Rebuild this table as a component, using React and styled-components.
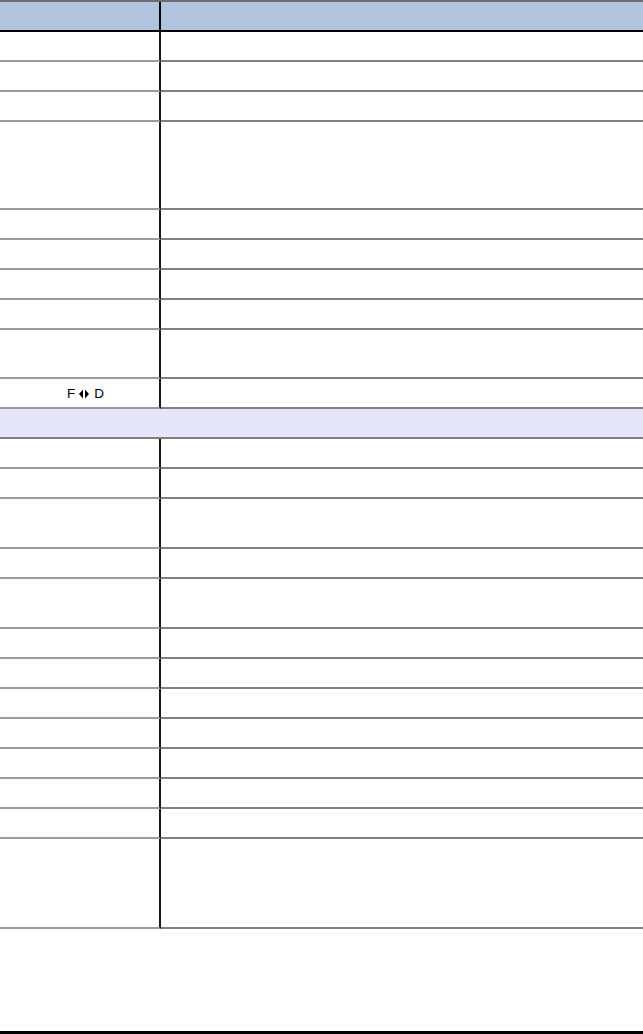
import styled, { createGlobalStyle } from "styled-components";

const GlobalStyle = createGlobalStyle`
  html, body {
    margin: 0;
    padding: 0;
    background: #ffffff;
  }
  body {
    font-family: "Liberation Sans", Arial, sans-serif;
    font-size: 12px;
    color: #000;
  }
`;

const Page = styled.div`
  display: flex;
  flex-direction: column;
  min-height: 100vh;
  box-sizing: border-box;
`;

const Table = styled.div`
  display: flex;
  flex-direction: column;
  border-top: 2px solid #6e6e6e;
`;

const HeaderRow = styled.div`
  display: grid;
  grid-template-columns: 161px 1fr;
  height: 30px;
  box-sizing: border-box;
  background: #b0c4de;
  border-bottom: 2px solid #000;
`;

const HeaderCell = styled.div`
  border-right: ${(p) => (p.$first ? "2px solid #000" : "none")};
`;

const Row = styled.div`
  display: grid;
  grid-template-columns: 161px 1fr;
`;

const Cell = styled.div`
  box-sizing: border-box;
  height: ${(p) => p.$h + 2}px;
  border-bottom: 2px solid ${(p) => (p.$first ? "#9c9c9c" : "#808080")};
  border-right: ${(p) => (p.$first ? "2px solid #1a1a1a" : "none")};
  display: flex;
  align-items: center;
  justify-content: center;
  padding-left: ${(p) => (p.$first ? "12px" : "0")};
`;

const SectionRow = styled.div`
  height: 30px;
  box-sizing: border-box;
  background: #e6e6fa;
  border-bottom: 2px solid #808080;
`;

const Key = styled.span`
  display: inline-flex;
  align-items: center;
  font-family: "Liberation Sans", Arial, sans-serif;
  font-size: 13.5px;
  line-height: 14px;
  padding-top: 1px;
`;

const KeyArrows = styled.svg`
  margin: 0 5px 0 4px;
`;

const Spacer = styled.div`
  flex: 1;
`;

const FooterRule = styled.div`
  height: 3px;
  background: #000;
`;

const Arrows = () => (
  <KeyArrows width="10" height="10" viewBox="0 0 10 10" aria-hidden="true">
    <polygon points="4,0.5 4,9.5 0,5" fill="#000" />
    <polygon points="6,0.5 6,9.5 10,5" fill="#000" />
  </KeyArrows>
);

const upper = [28, 28, 28, 86, 28, 28, 28, 28, 47];
const lower = [28, 28, 48, 28, 48, 28, 28, 28, 28, 28, 28, 28, 88];

const BodyRow = ({ h, children }) => (
  <Row>
    <Cell $first $h={h}>
      {children}
    </Cell>
    <Cell $h={h} />
  </Row>
);

const App = () => {
  return (
    <Page>
      <GlobalStyle />
      <Table>
        <HeaderRow>
          <HeaderCell $first />
          <HeaderCell />
        </HeaderRow>
        {upper.map((h, i) => (
          <BodyRow key={"u" + i} h={h} />
        ))}
        <BodyRow h={28}>
          <Key>
            F<Arrows />D
          </Key>
        </BodyRow>
        <SectionRow />
        {lower.map((h, i) => (
          <BodyRow key={"l" + i} h={h} />
        ))}
      </Table>
      <Spacer />
      <FooterRule />
    </Page>
  );
};

export default App;
